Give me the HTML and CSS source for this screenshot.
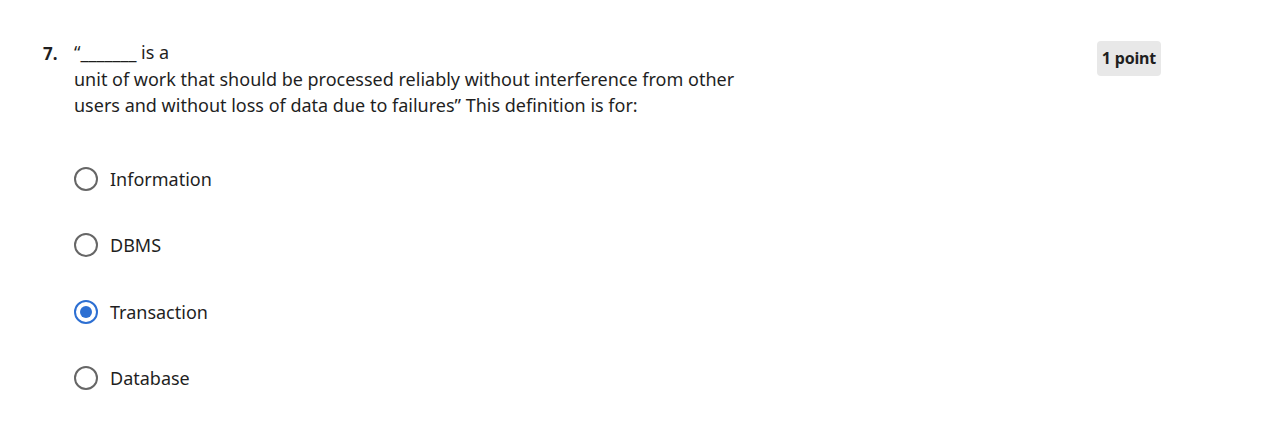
FILE: index.html
```html
<!DOCTYPE html>
<html>
<head>
<meta charset="utf-8">
<link rel="stylesheet" href="styles.css">
</head>
<body>
<div class="question">
  <div class="num">7.</div>
  <div class="main">
    <div class="prompt">“_______ is a<br>unit of work that should be processed reliably without interference from other users and without loss of data due to failures” This definition is for:</div>
    <div class="options">
      <label class="opt"><span class="radio"></span><span class="lbl">Information</span></label>
      <label class="opt"><span class="radio"></span><span class="lbl">DBMS</span></label>
      <label class="opt"><span class="radio checked"></span><span class="lbl">Transaction</span></label>
      <label class="opt"><span class="radio"></span><span class="lbl">Database</span></label>
    </div>
  </div>
  <div class="points">1 point</div>
</div>
</body>
</html>
```
FILE: styles.css
```css
html, body { margin: 0; padding: 0; background: #fff; }
body {
  font-family: "Noto Sans", "Open Sans", sans-serif;
  color: #1f1f1f;
  width: 1268px;
  height: 428px;
  overflow: hidden;
}
.question {
  display: flex;
  padding: 40px 0 0 43px;
}
.num {
  width: 31px;
  font-weight: 700;
  font-size: 17px;
  line-height: 26px;
  padding-top: 1px;
}
.main {
  width: 680px;
}
.prompt {
  font-size: 18px;
  line-height: 26.5px;
  margin-top: -1px;
}
.options {
  display: flex;
  flex-direction: column;
  margin-top: 48px;
  gap: 42.6px;
}
.opt {
  display: flex;
  align-items: center;
  gap: 12px;
  height: 24px;
  font-size: 18px;
}
.radio {
  width: 20px;
  height: 20px;
  border: 2px solid #666;
  border-radius: 50%;
  box-sizing: content-box;
  position: relative;
  flex: none;
}
.radio.checked {
  border-color: #2d6fd2;
}
.radio.checked::after {
  content: "";
  position: absolute;
  left: 4px; top: 4px;
  width: 12px; height: 12px;
  border-radius: 50%;
  background: #2d6fd2;
}
.points {
  margin-left: auto;
  margin-right: 107px;
  align-self: flex-start;
  margin-top: 1px;
  background: #e8e8e8;
  border-radius: 4px;
  padding: 0 5px;
  height: 35px;
  line-height: 35px;
  font-size: 16px;
  font-weight: 700;
  letter-spacing: -0.2px;
}
```
